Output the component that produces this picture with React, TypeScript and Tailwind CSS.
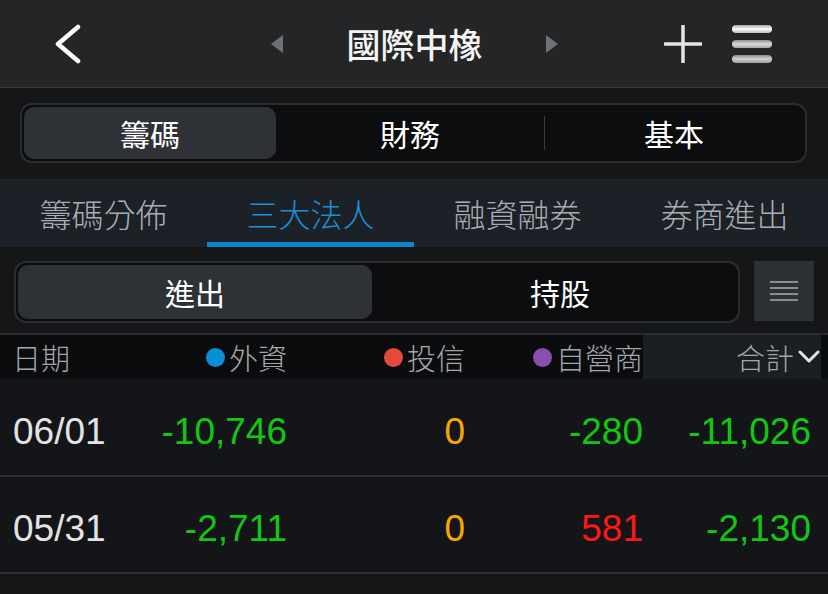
import React from "react";

const cjk = "font-['Noto_Sans_CJK_TC','Noto_Sans',sans-serif]";
const num = "font-['Liberation_Sans','Noto_Sans_CJK_TC',sans-serif]";

const rows = [
  { date: "06/01", f: "-10,746", t: "0", d: "-280", s: "-11,026", dc: "text-[#12c612]" },
  { date: "05/31", f: "-2,711", t: "0", d: "581", s: "-2,130", dc: "text-[#ff1616]" },
];

function TopBar() {
  return (
    <div className="grid h-[88px] grid-cols-[1fr_auto_1fr] items-center border-b border-[#37393b] bg-[#232527]">
      <div className="pl-[53px]">
        <svg width="30" height="40" viewBox="0 0 30 40" fill="none">
          <polyline points="25,3 5,20 25,37" stroke="#fafafa" strokeWidth="4.5" strokeLinecap="round" strokeLinejoin="round" />
        </svg>
      </div>
      <div className="flex items-center">
        <span className="h-0 w-0 border-y-[9px] border-r-[12px] border-y-transparent border-r-[#6c7176]" />
        <span className={`${cjk} ml-[64px] mr-[63px] text-[34px] font-medium leading-none text-[#f4f4f4]`}>國際中橡</span>
        <span className="h-0 w-0 border-y-[9px] border-l-[12px] border-y-transparent border-l-[#6c7176]" />
      </div>
      <div className="flex items-center justify-end gap-[30px] pr-[56px]">
        <svg width="38" height="38" viewBox="0 0 38 38">
          <path d="M19 1 V37 M1 19 H37" stroke="#e6e6e6" strokeWidth="3.5" strokeLinecap="round" />
        </svg>
        <div className="flex w-[40px] flex-col gap-[7px]">
          <span className="h-[8px] rounded-full bg-gradient-to-b from-[#a9a9a9] via-[#ffffff] to-[#bdbdbd]" />
          <span className="h-[8px] rounded-full bg-gradient-to-b from-[#8f8f8f] via-[#dcdcdc] to-[#a8a8a8]" />
          <span className="h-[8px] rounded-full bg-gradient-to-b from-[#8f8f8f] via-[#d2d2d2] to-[#9e9e9e]" />
        </div>
      </div>
    </div>
  );
}

export default function App() {
  return (
    <div className={`${cjk} h-[594px] w-[828px] overflow-hidden bg-[#151618]`}>
      <TopBar />

      {/* main segment */}
      <div className="mx-[20px] mr-[21px] mt-[15px] flex h-[60px] items-center rounded-[12px] border-2 border-[#2a2d30] bg-[#0c0d0f] p-[2px]">
        <div className="flex h-full w-[252px] items-center justify-center rounded-[10px] bg-[#2e3236] text-[30px] text-white">籌碼</div>
        <div className="flex w-[268px] items-center justify-center text-[30px] text-white">財務</div>
        <div className="h-[34px] w-px bg-[#3a3d40]" />
        <div className="flex flex-1 items-center justify-center text-[30px] text-white">基本</div>
      </div>

      {/* tabs */}
      <div className="mt-[16px] grid h-[68px] grid-cols-4 bg-[#1c2027] text-[32px] font-light">
        <div className="flex items-center justify-center border-b-[5px] border-transparent pt-[4px] text-[#a9adb1]">籌碼分佈</div>
        <div className="flex items-center justify-center border-b-[5px] border-[#0a86d1] pt-[4px] text-[#1a8fd5]">三大法人</div>
        <div className="flex items-center justify-center border-b-[5px] border-transparent pt-[4px] text-[#a9adb1]">融資融券</div>
        <div className="flex items-center justify-center border-b-[5px] border-transparent pt-[4px] text-[#a9adb1]">券商進出</div>
      </div>

      {/* sub segment */}
      <div className="mt-[14px] flex items-start gap-[14px] px-[14px]">
        <div className="flex h-[62px] w-[726px] items-center rounded-[12px] border-2 border-[#2a2d30] bg-[#0c0d0f] p-[2px]">
          <div className="flex h-full w-[354px] items-center justify-center rounded-[10px] bg-[#2e3236] text-[30px] text-white">進出</div>
          <div className="flex flex-1 items-center justify-center pl-[12px] text-[30px] text-white">持股</div>
        </div>
        <div className="flex h-[60px] w-[60px] flex-col items-center justify-center gap-[4px] bg-[#2d3135]">
          <span className="h-[2px] w-[28px] bg-[#8a8e92]" />
          <span className="h-[2px] w-[28px] bg-[#8a8e92]" />
          <span className="h-[2px] w-[28px] bg-[#8a8e92]" />
          <span className="h-[2px] w-[28px] bg-[#8a8e92]" />
        </div>
      </div>

      <div className="mt-[10px] h-[2px] bg-[#2b2d30]" />

      {/* column header */}
      <div className="flex h-[44px] items-center bg-[#0b0c0e] pl-[12px] text-[29px] font-light leading-none text-[#a3a7ab]">
        <div className="w-[142px]">日期</div>
        <div className="flex w-[133px] items-center justify-end">
          <span className="mr-[4px] h-[19px] w-[19px] rounded-full bg-[#0a8ed6]" />外資
        </div>
        <div className="flex w-[178px] items-center justify-end">
          <span className="mr-[4px] h-[19px] w-[19px] rounded-full bg-[#e5483c]" />投信
        </div>
        <div className="flex w-[178px] items-center justify-end">
          <span className="mr-[4px] h-[19px] w-[19px] rounded-full bg-[#8a4fae]" />自營商
        </div>
        <div className="flex h-full w-[178px] items-center justify-end bg-[#1a1f22] pr-[1px]">
          合計
          <svg width="22" height="14" viewBox="0 0 22 14" className="ml-[4px]">
            <polyline points="2,2 11,11 20,2" fill="none" stroke="#e4e4e4" strokeWidth="3" strokeLinecap="round" strokeLinejoin="round" />
          </svg>
        </div>
      </div>

      {rows.map((r, i) => (
        <div
          key={r.date}
          className={`${num} flex items-center border-b-2 border-[#2e3032] bg-[#141518] pl-[13px] pt-[8px] text-[37px] leading-none ${i === 0 ? "h-[98px]" : "h-[97px]"}`}
        >
          <div className="w-[141px] text-[#e3e3e3]">{r.date}</div>
          <div className="w-[133px] text-right text-[#12c612]">{r.f}</div>
          <div className="w-[178px] text-right text-[#f5a600]">{r.t}</div>
          <div className={`w-[178px] text-right ${r.dc}`}>{r.d}</div>
          <div className="w-[168px] text-right text-[#12c612]">{r.s}</div>
        </div>
      ))}
    </div>
  );
}
